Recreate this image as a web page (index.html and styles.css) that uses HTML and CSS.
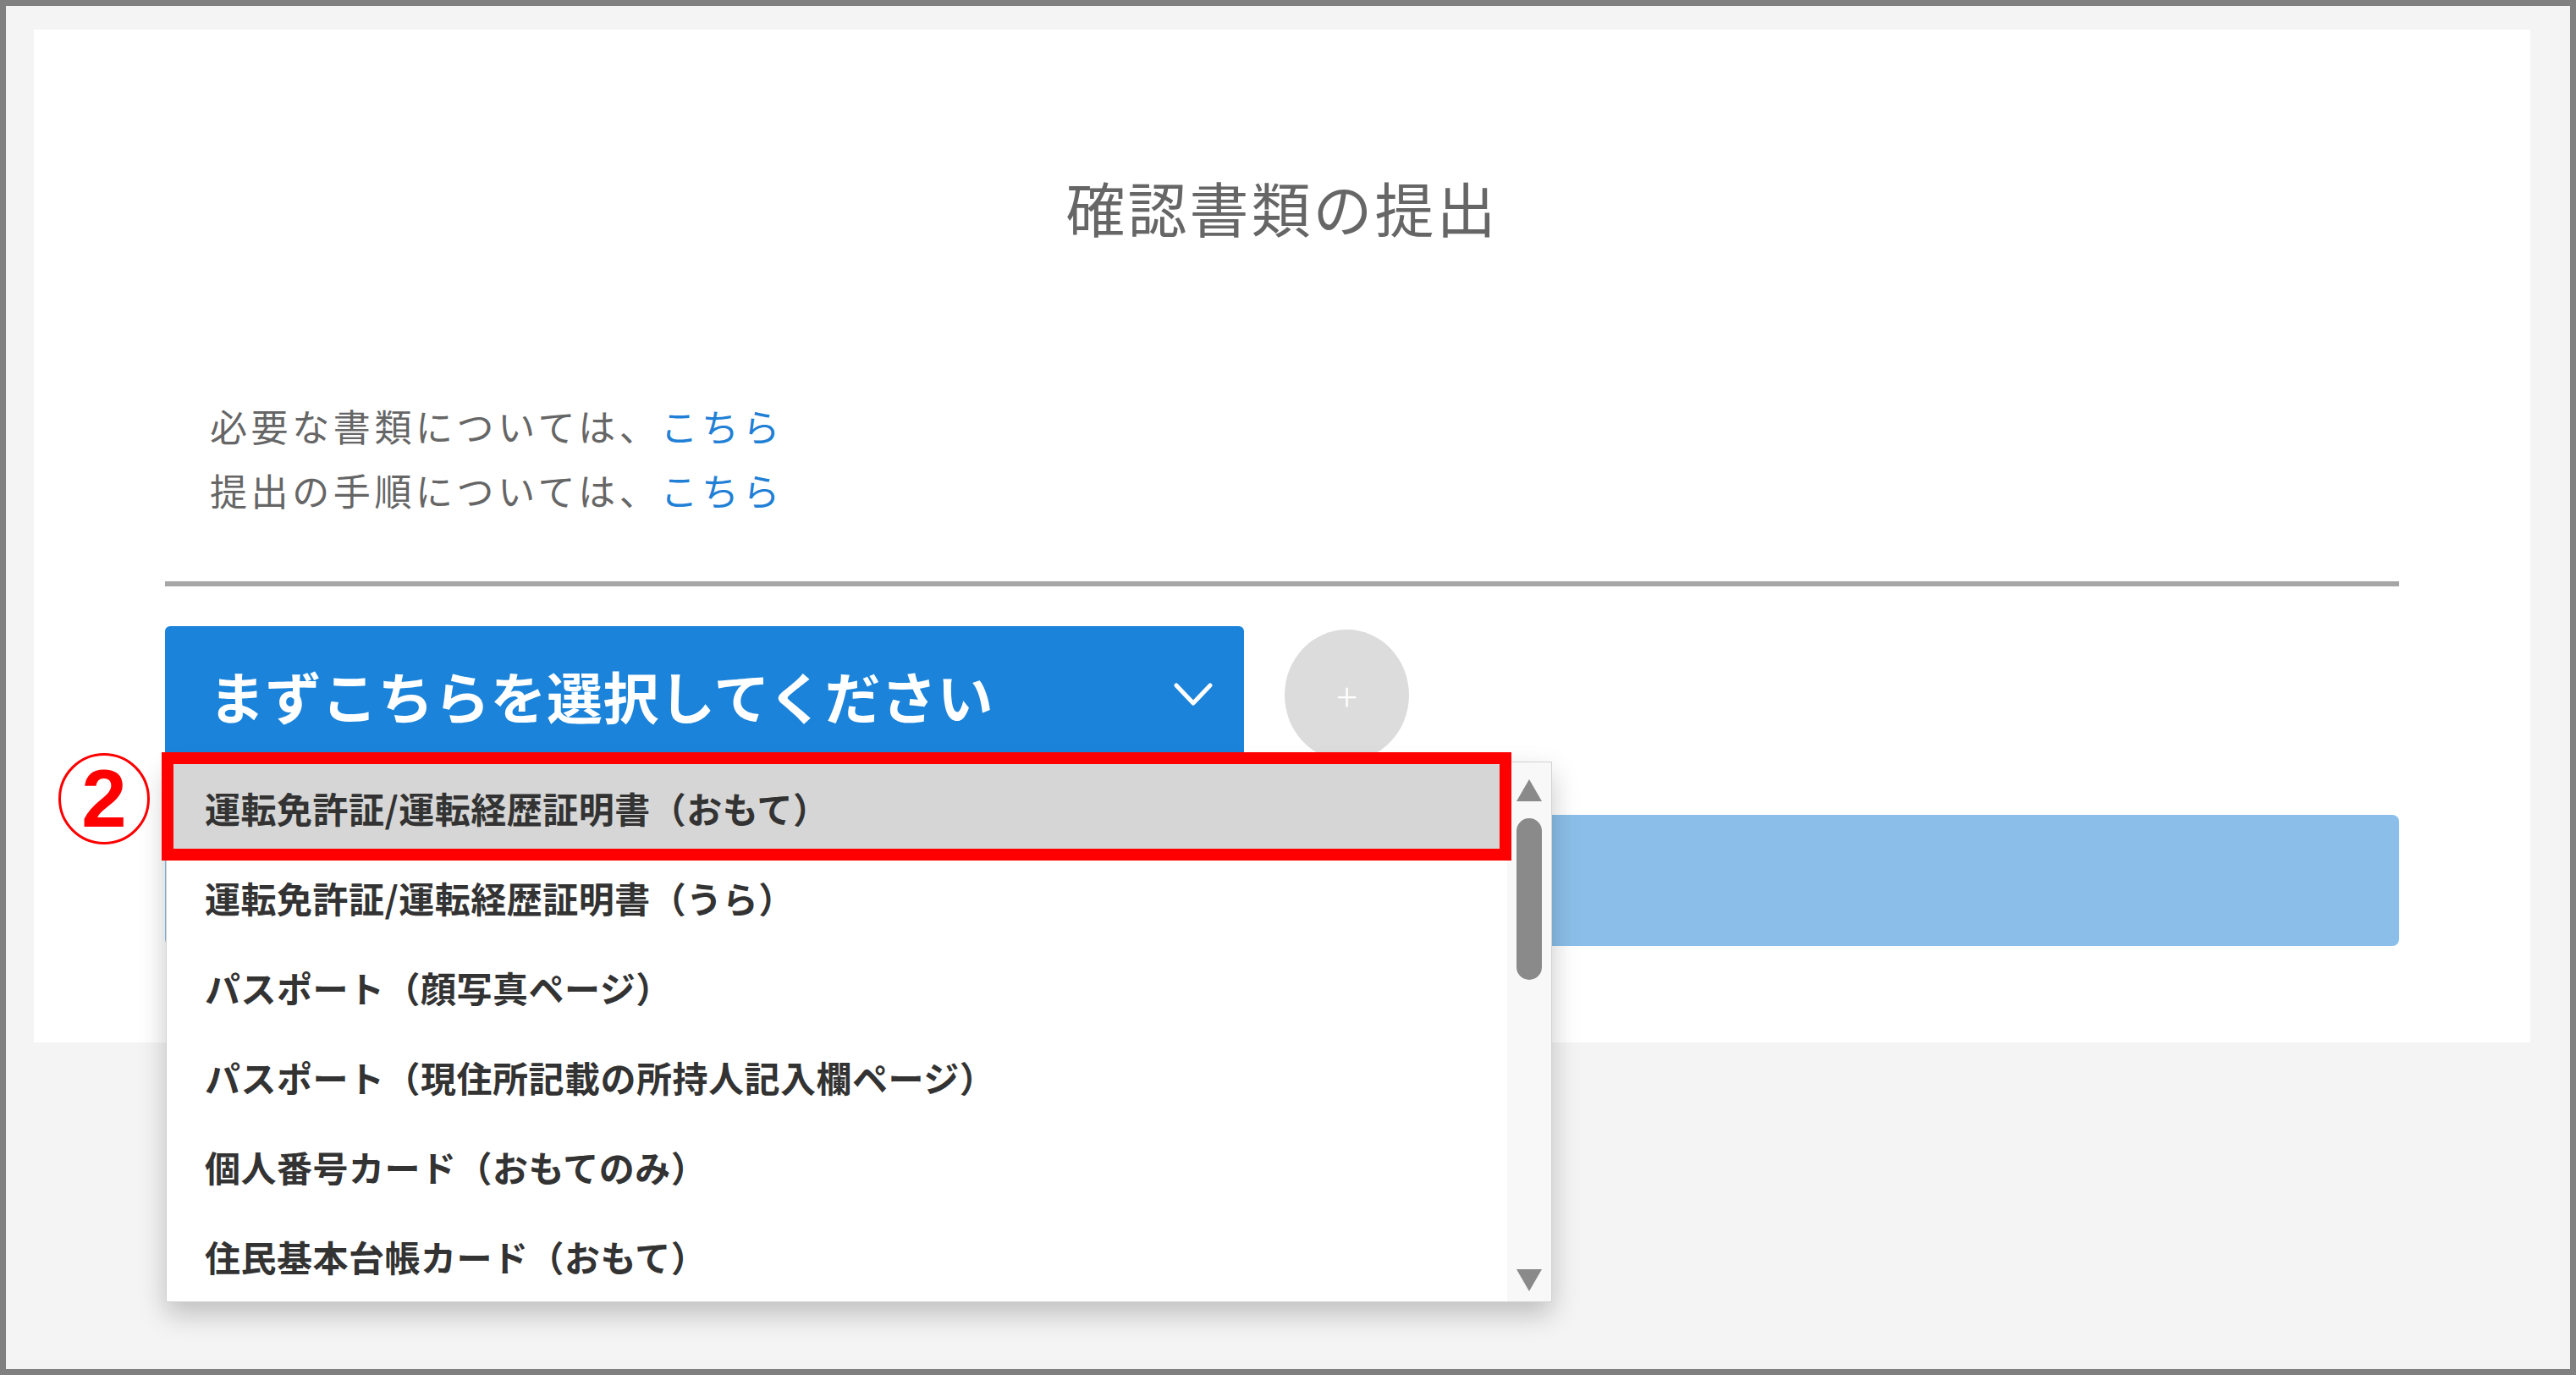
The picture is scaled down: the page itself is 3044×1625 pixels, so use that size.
FILE: index.html
```html
<!DOCTYPE html>
<html lang="ja">

<head>
    <meta charset="utf-8">
    <title>確認書類の提出</title>
    <link rel="stylesheet" href="styles.css">
</head>

<body>
    <div class="screen">
        <div class="card">
            <h1 class="title">確認書類の提出</h1>

            <div class="section">
                <p class="notes">
                    必要な書類については、<a href="#">こちら</a><br>
                    提出の手順については、<a href="#">こちら</a>
                </p>

                <hr class="divider">

                <div class="picker-row">
                    <div class="picker">
                        <div class="picker-btn">
                            <span>まずこちらを選択してください</span>
                            <svg class="chevron" width="46" height="28" viewBox="0 0 46 28">
                                <polyline points="3,3 23,24 43,3" fill="none" stroke="#fff" stroke-width="5" stroke-linecap="round" stroke-linejoin="round" />
                            </svg>
                        </div>

                        <div class="dropdown">
                            <ul class="options">
                                <li class="active">運転免許証/運転経歴証明書（おもて）</li>
                                <li>運転免許証/運転経歴証明書（うら）</li>
                                <li>パスポート（顔写真ページ）</li>
                                <li>パスポート（現住所記載の所持人記入欄ページ）</li>
                                <li>個人番号カード（おもてのみ）</li>
                                <li>住民基本台帳カード（おもて）</li>
                            </ul>
                            <div class="scrollbar">
                                <span class="arrow up"></span>
                                <span class="thumb"></span>
                                <span class="arrow down"></span>
                            </div>
                        </div>

                        <!-- annotation -->
                        <div class="callout"></div>
                        <span class="callout-num">2</span>
                    </div>

                    <div class="add-btn">+</div>
                </div>

                <div class="submit-bar"></div>
            </div>
        </div>
    </div>
</body>

</html>
```

FILE: styles.css
```css
body {
    margin: 0;
    font-family: "Noto Sans CJK JP", "Noto Sans", sans-serif;
}

.screen {
    height: 100vh;
    box-sizing: border-box;
    border: 7px solid #808080;
    background: #f4f4f4;
    padding: 28px 47px 0 33px;
}

.card {
    background: #fff;
    padding: 156px 155px 114px;
}

.title {
    margin: 0;
    font-size: 70px;
    font-weight: 400;
    line-height: 108px;
    letter-spacing: 3px;
    text-align: center;
    color: #666;
}

.notes {
    margin: 166px 0 0;
    padding-left: 53px;
    font-size: 44px;
    line-height: 76px;
    letter-spacing: 4.6px;
    color: #666;
}

.notes a {
    color: #1f80d6;
    text-decoration: none;
}

.divider {
    margin: 70px 0 0;
    border: none;
    height: 6px;
    background: #a6a6a6;
}

.picker-row {
    margin-top: 47px;
    display: flex;
    align-items: center;
    gap: 48px;
}

.picker {
    position: relative;
    width: 1275px;
}

.picker-btn {
    height: 162px;
    box-sizing: border-box;
    padding: 0 37px 0 52px;
    display: flex;
    align-items: center;
    justify-content: space-between;
    background: #1b84da;
    border-radius: 6px 6px 0 0;
    color: #fff;
    font-size: 66px;
    font-weight: 700;
    letter-spacing: 0.5px;
}

.chevron {
    display: block;
}

.add-btn {
    width: 147px;
    height: 155px;
    border-radius: 50%;
    background: #dcdcdc;
    color: #fff;
    font-size: 46px;
    font-weight: 300;
    display: flex;
    align-items: center;
    justify-content: center;
}

.submit-bar {
    margin-top: 61px;
    height: 155px;
    background: #8bbfe9;
    border-radius: 8px;
}

/* opened select list */
.dropdown {
    position: absolute;
    top: 160px;
    left: 1px;
    width: 1638px;
    height: 639px;
    box-sizing: border-box;
    background: #fff;
    border: 1px solid #d2d2d2;
    box-shadow: 0 14px 30px rgba(0, 0, 0, 0.22);
    z-index: 2;
}

.options {
    list-style: none;
    margin: 0 52px 0 0;
    padding: 0;
}

.options li {
    height: 106px;
    display: flex;
    align-items: center;
    padding-left: 45px;
    font-size: 42px;
    font-weight: 700;
    letter-spacing: 0.5px;
    color: #333;
}

.options li.active {
    background: #d6d6d6;
}

.scrollbar {
    position: absolute;
    top: 0;
    right: 0;
    bottom: 0;
    width: 52px;
    background: #f8f8f8;
    display: flex;
    flex-direction: column;
    align-items: center;
}

.arrow {
    width: 30px;
    height: 26px;
    background: #8a8a8a;
}

.arrow.up {
    margin-top: 20px;
    clip-path: polygon(50% 0, 100% 100%, 0 100%);
}

.arrow.down {
    margin-top: auto;
    margin-bottom: 12px;
    clip-path: polygon(0 0, 100% 0, 50% 100%);
}

.thumb {
    margin-top: 20px;
    width: 30px;
    height: 191px;
    border-radius: 15px;
    background: #8a8a8a;
}

.callout {
    position: absolute;
    left: -4px;
    top: 149px;
    width: 1595px;
    height: 128px;
    box-sizing: border-box;
    border: 14px solid #ff0000;
    z-index: 3;
}

.callout-num {
    position: absolute;
    left: -126px;
    top: 150px;
    width: 108px;
    height: 108px;
    box-sizing: border-box;
    border: 3px solid #ff0000;
    border-radius: 50%;
    display: flex;
    align-items: center;
    justify-content: center;
    color: #ff0000;
    font-family: "Liberation Sans", sans-serif;
    font-size: 96px;
    font-weight: 700;
    line-height: 1;
    z-index: 3;
}
```
